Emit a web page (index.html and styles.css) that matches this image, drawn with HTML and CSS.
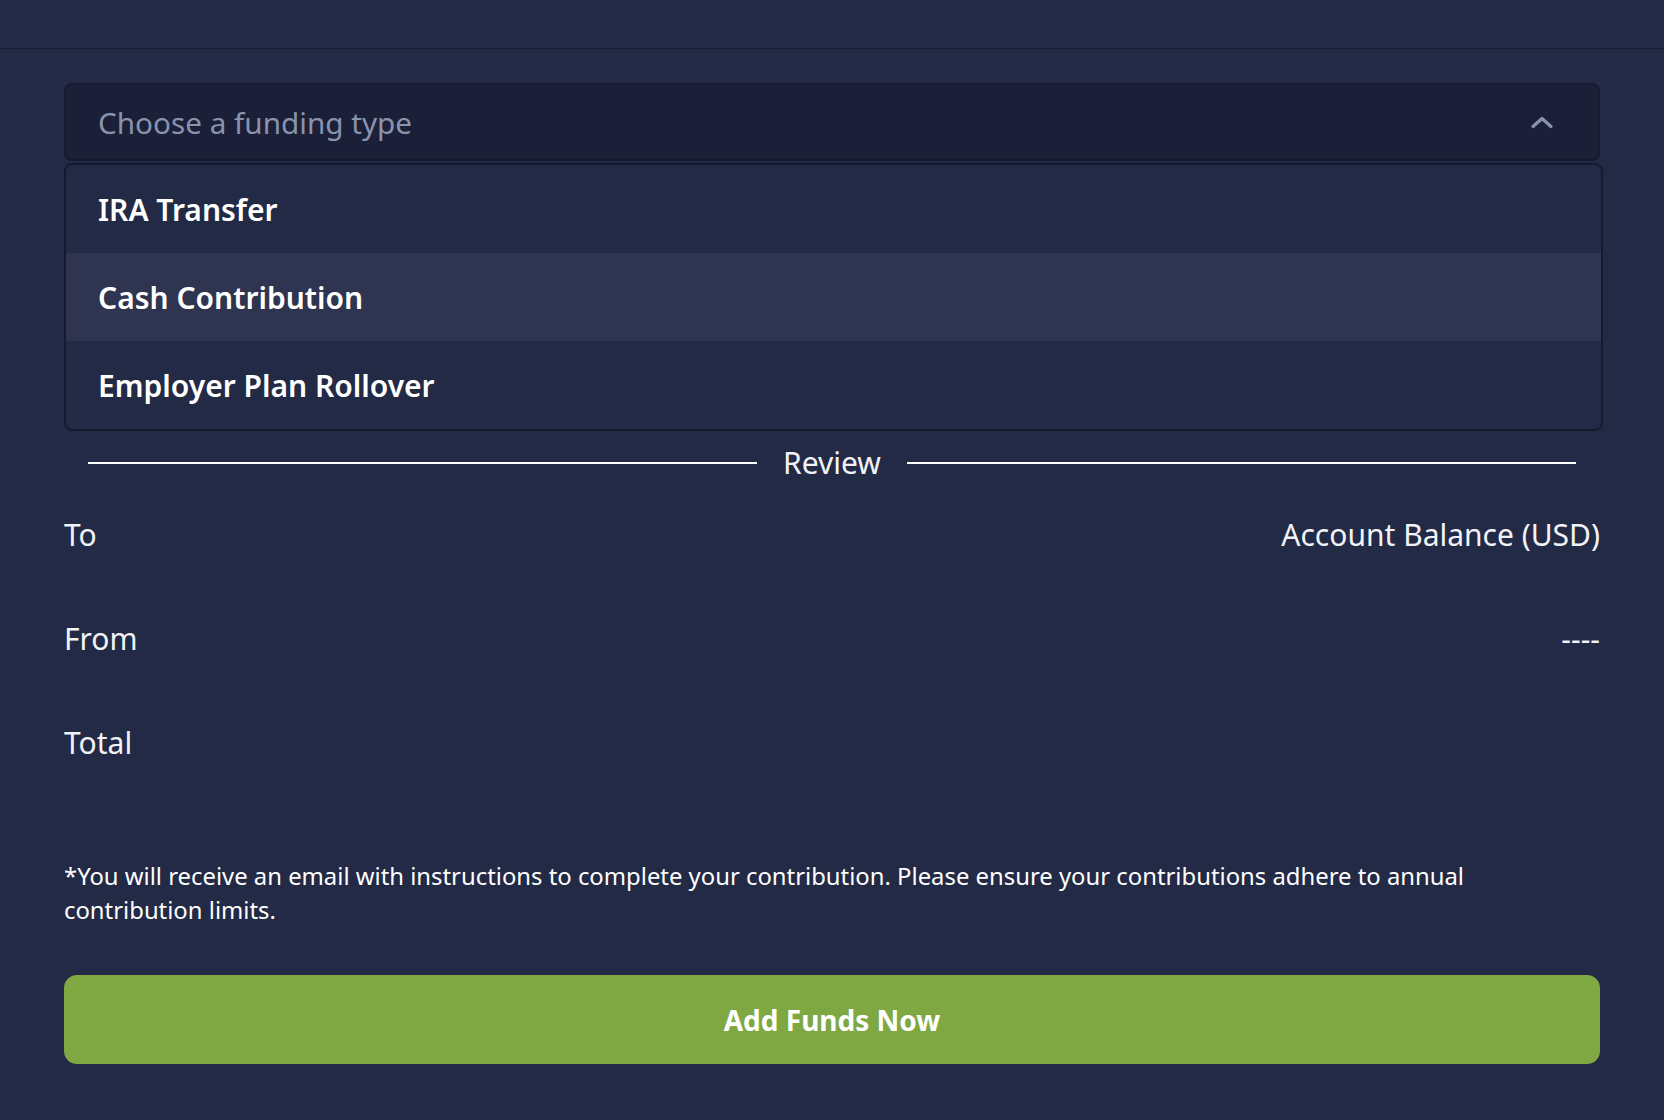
FILE: index.html
```html
<!DOCTYPE html>
<html lang="en">
<head>
<meta charset="utf-8">
<title>Add Funds</title>
<link rel="stylesheet" href="styles.css">
</head>
<body>
<div class="topbar"></div>
<main class="content">
  <div class="select">
    <span class="placeholder">Choose a funding type</span>
    <svg class="chev" width="24" height="14" viewBox="0 0 24 14" aria-hidden="true">
      <path d="M3 11.5 L12 3.5 L21 11.5" fill="none" stroke="#8a93ad" stroke-width="3.2" stroke-linecap="round" stroke-linejoin="round"/>
    </svg>
  </div>
  <ul class="menu">
    <li class="menu-item">IRA Transfer</li>
    <li class="menu-item active">Cash Contribution</li>
    <li class="menu-item">Employer Plan Rollover</li>
  </ul>
  <div class="divider">
    <span class="line"></span>
    <span class="divider-label">Review</span>
    <span class="line"></span>
  </div>
  <div class="row"><span>To</span><span>Account Balance (USD)</span></div>
  <div class="row"><span>From</span><span>----</span></div>
  <div class="row"><span>Total</span><span></span></div>
  <p class="note">*You will receive an email with instructions to complete your contribution. Please ensure your contributions adhere to annual contribution limits.</p>
  <button class="cta">Add Funds Now</button>
</main>
</body>
</html>
```
FILE: styles.css
```css
html, body {
  margin: 0;
  padding: 0;
}
body {
  background: #232a46;
  font-family: "Noto Sans", "Open Sans", sans-serif;
  color: #ffffff;
  height: 1120px;
  overflow: hidden;
}
.topbar {
  height: 48px;
  border-bottom: 1px solid #191d31;
}
.content {
  padding: 34px 64px 0;
}
.select {
  box-sizing: border-box;
  height: 78px;
  border: 2px solid #151a2d;
  border-radius: 8px;
  background: #1b1f38;
  display: flex;
  align-items: center;
  justify-content: space-between;
  padding: 0 44px 0 32px;
}
.placeholder {
  font-size: 29.7px;
  color: #8a93ad;
}
.chev {
  display: block;
}
.menu {
  list-style: none;
  margin: 2px -3px 0 0;
  padding: 0;
  border: 2px solid #151a2d;
  border-radius: 8px;
  overflow: hidden;
  background: #232a46;
}
.menu-item {
  height: 88px;
  display: flex;
  align-items: center;
  padding-left: 32px;
  font-size: 30px;
  font-weight: 600;
  color: #ffffff;
}
.menu-item.active {
  background: #2f3450;
}
.divider {
  margin-top: 13px;
  display: flex;
  align-items: center;
  gap: 26px;
  padding: 0 24px;
}
.line {
  flex: 1;
  height: 2px;
  background: #ffffff;
}
.divider-label {
  font-size: 30px;
  line-height: 38px;
  color: #f2f3f7;
}
.row {
  height: 104px;
  display: flex;
  align-items: center;
  justify-content: space-between;
  font-size: 30px;
  color: #f2f3f7;
}
.note {
  margin: 65px 0 0;
  font-size: 23.85px;
  line-height: 34px;
  color: #ffffff;
}
.cta {
  display: block;
  margin-top: 48px;
  width: 100%;
  height: 89px;
  border: none;
  border-radius: 13px;
  background: #7fa843;
  color: #ffffff;
  font-family: "Noto Sans", "Open Sans", sans-serif;
  font-weight: 700;
  font-size: 28px;
}
```
